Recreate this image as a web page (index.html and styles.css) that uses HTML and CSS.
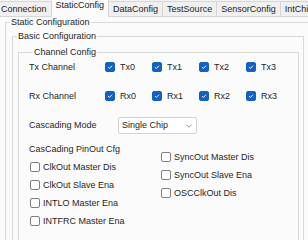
FILE: index.html
```html
<!DOCTYPE html>
<html>
<head>
<meta charset="utf-8">
<link rel="stylesheet" href="styles.css">
</head>
<body>
<div class="window">
  <div class="tabs">
    <div class="tab first">Connection</div>
    <div class="tab active">StaticConfig</div>
    <div class="tab">DataConfig</div>
    <div class="tab">TestSource</div>
    <div class="tab">SensorConfig</div>
    <div class="tab">IntChip</div>
  </div>
  <div class="pane">
    <fieldset class="group g1">
      <legend>Static Configuration</legend>
      <fieldset class="group g2">
        <legend>Basic Configuration</legend>
        <fieldset class="group g3">
          <legend>Channel Config</legend>
          <div class="channels">
            <span class="row-label">Tx Channel</span>
            <label class="check"><span class="cb on"><svg viewBox="0 0 10 10"><path d="M2.6 5.1 L4.3 6.8 L7.5 3.4"/></svg></span>Tx0</label>
            <label class="check"><span class="cb on"><svg viewBox="0 0 10 10"><path d="M2.6 5.1 L4.3 6.8 L7.5 3.4"/></svg></span>Tx1</label>
            <label class="check"><span class="cb on"><svg viewBox="0 0 10 10"><path d="M2.6 5.1 L4.3 6.8 L7.5 3.4"/></svg></span>Tx2</label>
            <label class="check"><span class="cb on"><svg viewBox="0 0 10 10"><path d="M2.6 5.1 L4.3 6.8 L7.5 3.4"/></svg></span>Tx3</label>
            <span class="row-label">Rx Channel</span>
            <label class="check"><span class="cb on"><svg viewBox="0 0 10 10"><path d="M2.6 5.1 L4.3 6.8 L7.5 3.4"/></svg></span>Rx0</label>
            <label class="check"><span class="cb on"><svg viewBox="0 0 10 10"><path d="M2.6 5.1 L4.3 6.8 L7.5 3.4"/></svg></span>Rx1</label>
            <label class="check"><span class="cb on"><svg viewBox="0 0 10 10"><path d="M2.6 5.1 L4.3 6.8 L7.5 3.4"/></svg></span>Rx2</label>
            <label class="check"><span class="cb on"><svg viewBox="0 0 10 10"><path d="M2.6 5.1 L4.3 6.8 L7.5 3.4"/></svg></span>Rx3</label>
          </div>
          <div class="mode-row">
            <span class="mode-label">Cascading Mode</span>
            <div class="select">
              <span>Single Chip</span>
              <svg class="chev" viewBox="0 0 6 4"><path d="M0.5 0.8 L3 3.2 L5.5 0.8"/></svg>
            </div>
          </div>
          <div class="pinout">
            <div class="col left">
              <div class="sub">CasCading PinOut Cfg</div>
              <label class="check item"><span class="cb"></span>ClkOut Master Dis</label>
              <label class="check item"><span class="cb"></span>ClkOut Slave Ena</label>
              <label class="check item"><span class="cb"></span>INTLO Master Ena</label>
              <label class="check item"><span class="cb"></span>INTFRC Master Ena</label>
            </div>
            <div class="col right">
              <label class="check item"><span class="cb"></span>SyncOut Master Dis</label>
              <label class="check item"><span class="cb"></span>SyncOut Slave Ena</label>
              <label class="check item"><span class="cb"></span>OSCClkOut Dis</label>
            </div>
          </div>
        </fieldset>
      </fieldset>
    </fieldset>
  </div>
</div>
</body>
</html>
```

FILE: styles.css
```css
html, body {
  margin: 0;
  padding: 0;
  overflow: hidden;
  background: #fbfbfb;
}
body {
  width: 308px;
  height: 240px;
  font-family: "Liberation Sans", Arial, sans-serif;
  font-size: 9px;
  line-height: 11px;
  color: #262626;
}
.window {
  width: 316px;
  height: 240px;
  overflow: hidden;
}
.tabs {
  display: flex;
  align-items: flex-end;
  height: 16px;
  background: #f3f3f3;
}
.tab {
  height: 14px;
  line-height: 14px;
  padding: 0 4px;
  border-top: 1px solid #d6d6d6;
  border-right: 1px solid #d6d6d6;
  background: #f0f0f0;
  white-space: nowrap;
  color: #222;
}
.tab.first {
  padding-left: 1px;
}
.tab.active {
  height: 17px;
  line-height: 11px;
  margin-bottom: -1px;
  background: #fbfbfb;
  position: relative;
}
.pane {
  border-top: 1px solid #d6d6d6;
  padding-left: 5px;
  height: 223px;
  overflow: hidden;
}
.group {
  margin: 0;
  padding: 0;
  border: 1px solid #d9d9d9;
  min-inline-size: 0;
}
.group > legend {
  margin-left: 4px;
  padding: 0 1px;
  line-height: 10px;
  color: #1e1e1e;
}
.g1 {
  height: 240px;
}
.g2 {
  margin: 4px 11px 0 6px;
  height: 220px;
}
.g3 {
  margin: 6px 4px 0 5px;
  padding-left: 10px;
  height: 200px;
}
.channels {
  display: grid;
  grid-template-columns: 76px repeat(4, 47px);
  grid-auto-rows: 16px;
  row-gap: 13px;
  align-items: center;
  padding-top: 2px;
}
.check {
  display: flex;
  align-items: center;
  gap: 4px;
  white-space: nowrap;
}
.cb {
  box-sizing: border-box;
  width: 10px;
  height: 10px;
  border: 1px solid #7d7d7d;
  border-radius: 2px;
  background: #fff;
  flex: none;
  display: flex;
}
.cb.on {
  background: #1461c6;
  border-color: #1461c6;
}
.cb svg {
  width: 100%;
  height: 100%;
  fill: none;
  stroke: #fff;
  stroke-width: 1.2;
}
.channels .cb {
  margin-right: 1px;
}
.mode-row {
  display: flex;
  align-items: center;
  margin-top: 13px;
}
.mode-label {
  width: 89px;
}
.select {
  box-sizing: border-box;
  width: 79px;
  height: 17px;
  border: 1px solid #d2d2d2;
  border-radius: 2px;
  background: #fff;
  display: flex;
  align-items: center;
  justify-content: space-between;
  padding: 0 4px 0 3px;
}
.chev {
  width: 6px;
  height: 4px;
  fill: none;
  stroke: #8a8a8a;
  stroke-width: 0.9;
}
.pinout {
  display: flex;
  margin-top: 10px;
}
.col.left {
  width: 131px;
}
.col.right {
  padding-top: 4px;
}
.sub {
  height: 11px;
  margin-bottom: 3px;
}
.item {
  height: 18px;
  gap: 3px;
  margin-left: 1px;
}
.item .cb {
  width: 10px;
  height: 10px;
  border-color: #808080;
}
```
